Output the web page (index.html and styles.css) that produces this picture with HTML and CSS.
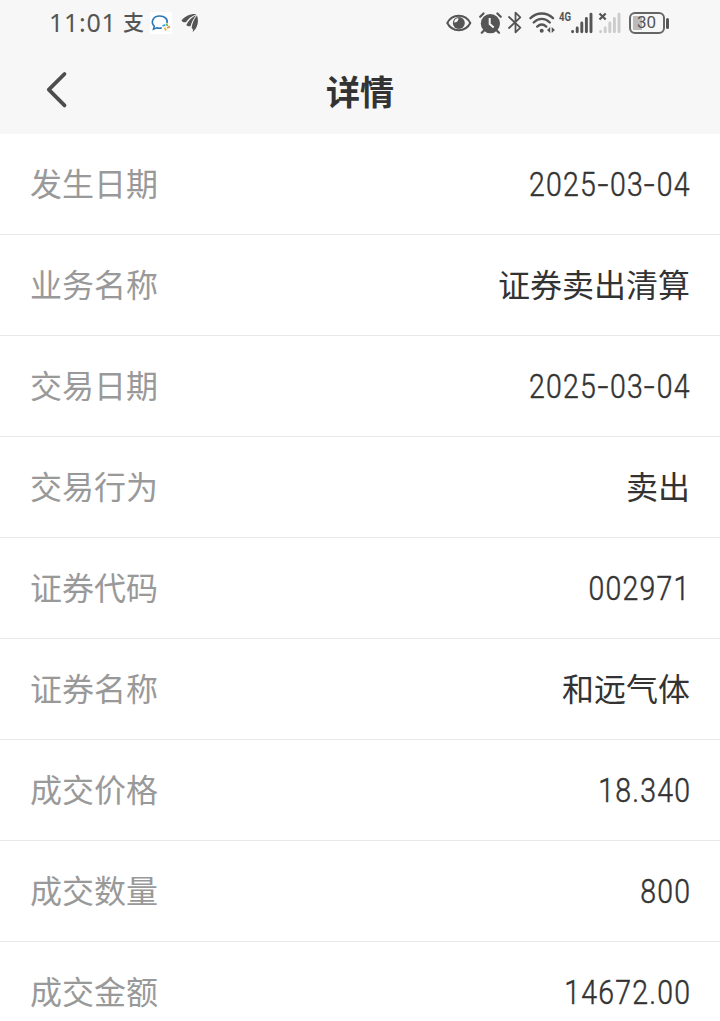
FILE: index.html
```html
<!DOCTYPE html>
<html lang="zh-CN">

<head>
    <meta charset="UTF-8">
    <meta name="viewport" content="width=device-width, initial-scale=1.0">
    <title>详情</title>
    <link rel="stylesheet" href="styles.css">
</head>

<body>
    <header class="top">
        <div class="status-bar">
            <div class="status-left">
                <span class="time">11:01</span>
                <span class="pay">支</span>
                <svg class="chat" width="22" height="22" viewBox="0 0 22 22" fill="none">
                    <rect width="22" height="22" fill="#fff" />
                    <path d="M11.8 15.8 C10 16.4 8 16.4 6.8 15.8 L3.5 17.2 L4.3 14.2 C.2 10 3 4 9.6 4 C15 4 18 7.2 17 11" stroke="#2878b8" stroke-width="1.6" />
                    <path d="M12.5 14 L15.3 12.8" stroke="#38a0e8" stroke-width="1.8" />
                    <path d="M16.3 11.5 L17.6 14.2" stroke="#78b858" stroke-width="1.8" />
                    <path d="M20 14.5 L17.2 16" stroke="#e88a38" stroke-width="1.8" />
                    <path d="M16 18.5 L14.6 15.7" stroke="#e8b838" stroke-width="1.8" />
                </svg>
                <svg class="wing" width="18" height="20" viewBox="0 0 18 20" fill="#555">
                    <path d="M.5 7.5 C4 3 9 .6 15.5 1 C10 3.5 7 6 5 9.2 C3 9.6 1 9 .5 7.5Z" />
                    <path d="M5.3 12 C7.5 7.5 11 4 15.5 2 C12.2 6 10.6 9 9.6 13 C8 13.6 6.2 13.2 5.3 12Z" />
                    <path d="M10.6 15 C11.2 10 13 6 16 2.5 C18 8 17 14.5 11.6 19.2 C12.4 17 12 15.8 10.6 15Z" />
                </svg>
            </div>
            <div class="status-right">
                <svg width="26" height="20" viewBox="0 0 26 20">
                    <path d="M1.3 10 C6 .2 19.5 .2 24.3 10 C19.5 19.5 6 19.5 1.3 10Z" fill="none" stroke="#555" stroke-width="2" />
                    <circle cx="12.8" cy="10" r="6" fill="#555" />
                    <path d="M12.4 5 C12.8 7.8 11 9.4 8 9.6 C8.2 6.9 9.8 5.2 12.4 5Z" fill="#f7f7f7" />
                </svg>
                <svg class="alarm" width="23" height="22" viewBox="0 0 23 22" fill="none" stroke="#555">
                    <circle cx="11.4" cy="11.6" r="9.6" fill="#555" stroke="none" />
                    <path d="M1.2 4.8 L4.5 1.5 M21.7 4.8 L18.4 1.5 M5 18.5 L2.8 20.7 M17.8 18.5 L20 20.7" stroke-width="2.2" stroke-linecap="round" />
                    <path d="M10.7 6 V12 L14.7 15.5" stroke="#f7f7f7" stroke-width="2" />
                </svg>
                <svg class="bluetooth" width="14" height="23" viewBox="0 0 14 23" fill="none" stroke="#555" stroke-width="1.8">
                    <path d="M1 6 L12.3 16.7 L7.5 21.3 V1.7 L12.3 6.3 L1 17" stroke-linejoin="round" stroke-linecap="round" />
                </svg>
                <svg class="wifi" width="26" height="22" viewBox="0 0 26 22" fill="none" stroke="#555" stroke-width="2.3" stroke-linecap="round">
                    <path d="M1.5 6.2 C8 -.1 17.5 -.1 24 6.2 M4.7 10.5 C9.5 5.7 16 5.7 20.8 10.5 M8.2 14.6 C11 12 14.5 12 17.3 14.6" />
                    <circle cx="12.7" cy="18.8" r="2" fill="#555" stroke="none" />
                    <path d="M21.2 15 V21 L18 18Z M22.7 15 V21 L25.9 18Z" fill="#555" stroke="none" />
                </svg>
                <span class="net">4G</span>
                <svg class="signal" width="22" height="22" viewBox="0 0 22 22" stroke="#555" stroke-width="2.9" stroke-linecap="round">
                    <path d="M1.6 19.5 V19.8 M6.2 16 V19.8 M10.8 11 V19.8 M15.4 6.5 V19.8 M20 2.3 V19.8" />
                </svg>
                <svg class="signal-off" width="24" height="22" viewBox="0 0 24 22" fill="none" stroke="#ccc" stroke-width="2.9" stroke-linecap="round">
                    <path d="M2.6 19.5 V19.8 M7.2 16 V19.8 M11.8 11 V19.8 M16.4 6.5 V19.8 M21 2.3 V19.8" />
                    <path d="M1.5 1.5 L7.7 7.5 M7.7 1.5 L1.5 7.5" stroke="#555" stroke-width="2.2" stroke-linecap="butt" />
                </svg>
                <div class="battery"><span>30</span></div>
            </div>
        </div>
        <nav class="nav">
            <svg class="back" width="24" height="38" viewBox="0 0 24 38" fill="none" stroke="#4d4d4d" stroke-width="3.8" stroke-linecap="round" stroke-linejoin="round">
                <path d="M19.5 3 L3.8 18.7 L19.5 34.4" />
            </svg>
            <h1>详情</h1>
        </nav>
    </header>

    <main class="list">
        <div class="row"><span class="label">发生日期</span><span class="num">2025<i>-</i>03<i>-</i>04</span></div>
        <div class="row"><span class="label">业务名称</span><span class="value">证券卖出清算</span></div>
        <div class="row"><span class="label">交易日期</span><span class="num">2025<i>-</i>03<i>-</i>04</span></div>
        <div class="row"><span class="label">交易行为</span><span class="value">卖出</span></div>
        <div class="row"><span class="label">证券代码</span><span class="num">002971</span></div>
        <div class="row"><span class="label">证券名称</span><span class="value">和远气体</span></div>
        <div class="row"><span class="label">成交价格</span><span class="num">18.340</span></div>
        <div class="row"><span class="label">成交数量</span><span class="num">800</span></div>
        <div class="row"><span class="label">成交金额</span><span class="num">14672.00</span></div>
    </main>
</body>

</html>
```
FILE: styles.css
```css
body {
    margin: 0;
    height: 1021px;
    overflow: hidden;
    background: #fff;
    color: #333;
    font-family: "Liberation Sans", "Noto Sans CJK SC", sans-serif;
}

.top {
    height: 134px;
    background: #f7f7f7;
}

.status-bar {
    display: flex;
    justify-content: space-between;
    height: 45px;
    padding: 0 50px 0 49px;
    color: #555;
}

.status-left,
.status-right {
    display: flex;
    align-items: center;
}

.time {
    width: 74px;
    font: 25px/45px "Noto Sans", sans-serif;
    letter-spacing: 0.7px;
}

.pay {
    width: 27px;
    font: 500 21px/41px "Noto Sans CJK SC", sans-serif;
    margin-top: -3px;
}

.wing {
    margin-left: 9px;
}

.alarm {
    margin-left: 7px;
}

.bluetooth {
    margin-left: 6px;
}

.wifi {
    margin-left: 7px;
}

.net {
    width: 12px;
    margin: -12px 0 0 4px;
    font: 700 12px/12px Roboto, sans-serif;
    transform: scaleX(0.8);
    transform-origin: left;
}

.signal-off {
    margin-left: 5px;
}

.battery {
    position: relative;
    box-sizing: border-box;
    width: 36px;
    height: 22px;
    margin: 0 5px 0 7px;
    border: 2px solid #666;
    border-radius: 6px;
    background: linear-gradient(#bbb, #bbb) 2px 2px / 9px 14px no-repeat;
    font: 17px/17px Roboto, sans-serif;
    text-align: center;
}

.battery span {
    margin-right: 1px;
}

.battery::after {
    content: "";
    position: absolute;
    top: 4px;
    right: -6px;
    width: 3px;
    height: 11px;
    border-radius: 2px;
    background: #555;
}

.nav {
    display: grid;
    grid-template-columns: 80px 1fr 80px;
    align-items: center;
    height: 89px;
}

.back {
    margin-left: 45px;
}

.nav h1 {
    margin: 2px 0 0;
    font: 700 34px/48px "Noto Sans CJK SC", sans-serif;
    text-align: center;
}

.row {
    display: flex;
    align-items: center;
    justify-content: space-between;
    height: 100px;
    padding: 0 30px;
    border-bottom: 1px solid #e9e9e9;
}

.label,
.value {
    font: 32px/48px "Noto Sans CJK SC", sans-serif;
    padding-bottom: 4px;
}

.label {
    color: #999;
}

.num {
    font: 300 32.5px/48px Roboto, sans-serif;
    letter-spacing: 1.4px;
    margin-right: -1px;
    padding-top: 1px;
    transform: scaleX(0.875);
    transform-origin: right;
    -webkit-text-stroke: 0.5px #333;
}

/* the dash is drawn a little longer than the font's hyphen */
.num i {
    display: inline-block;
    font-style: normal;
    padding: 0 2px;
    transform: scaleX(1.35);
}
```
